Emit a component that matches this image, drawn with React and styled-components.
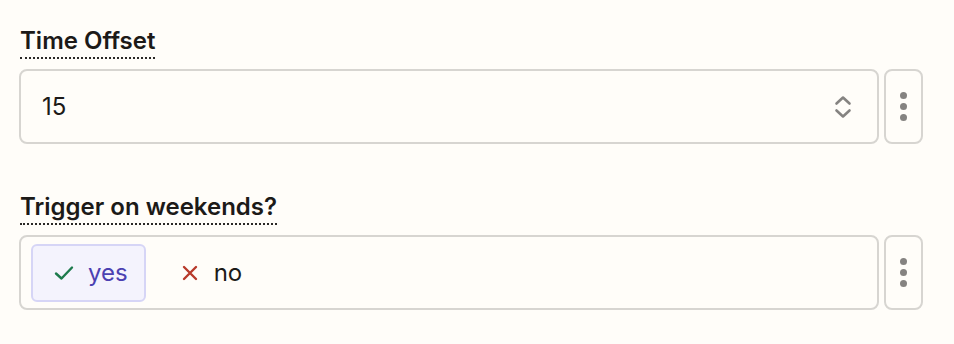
import styled, { createGlobalStyle } from "styled-components";

const Global = createGlobalStyle`
  body {
    margin: 0;
    background: #fffdf9;
    font-family: Inter, "Noto Sans", sans-serif;
    color: #1c1a18;
  }
`;

const Page = styled.div`
  padding: 26px 31px 0 19px;
  display: flex;
  flex-direction: column;
  gap: 48px;
`;

const Field = styled.div`
  display: flex;
  flex-direction: column;
  align-items: flex-start;
  gap: 10px;
`;

const Label = styled.div`
  font-size: 24px;
  font-weight: 600;
  line-height: 29px;
  margin-left: 1px;
  padding-bottom: 2px;
  border-bottom: 2px dotted #2a2826;
`;

const Row = styled.div`
  display: flex;
  gap: 5px;
  width: 100%;
  height: 75px;
`;

const Box = styled.div`
  flex: 1;
  display: flex;
  align-items: center;
  border: 2px solid #d7d5d1;
  border-radius: 8px;
  padding: ${(p) => p.$pad || "0 25px 0 21px"};
`;

const Value = styled.span`
  flex: 1;
  font-size: 24px;
  color: #1c1a18;
`;

const Kebab = styled.div`
  width: 35px;
  border: 2px solid #d7d5d1;
  border-radius: 8px;
  display: flex;
  flex-direction: column;
  align-items: center;
  justify-content: center;
  gap: 4px;
`;

const Dot = styled.span`
  width: 7px;
  height: 7px;
  border-radius: 50%;
  background: #858381;
`;

const Choice = styled.div`
  display: flex;
  align-items: center;
  gap: ${(p) => (p.$on ? "14px" : "16px")};
  height: 54px;
  padding: ${(p) => (p.$on ? "0 16px 0 21px" : "0 16px 0 34px")};
  border: 2px solid ${(p) => (p.$on ? "#d6d5f6" : "transparent")};
  background: ${(p) => (p.$on ? "#f4f3fd" : "transparent")};
  border-radius: 6px;
  font-size: 24px;
  color: ${(p) => (p.$on ? "#4b41b2" : "#1c1a18")};
`;

function Chevrons() {
  return (
    <svg width="18" height="26" viewBox="0 0 18 26" fill="none">
      <path d="M2.5 9.5L9 3.5L15.5 9.5" stroke="#858381" strokeWidth="2.6" strokeLinecap="round" strokeLinejoin="round" />
      <path d="M2.5 16.5L9 22.5L15.5 16.5" stroke="#858381" strokeWidth="2.6" strokeLinecap="round" strokeLinejoin="round" />
    </svg>
  );
}

function Check() {
  return (
    <svg width="20" height="16" viewBox="0 0 20 16" fill="none">
      <path d="M2 8.5L7.5 13.5L18 2.5" stroke="#1d7a4c" strokeWidth="2.4" strokeLinecap="round" strokeLinejoin="round" />
    </svg>
  );
}

function Cross() {
  return (
    <svg width="16" height="16" viewBox="0 0 16 16" fill="none">
      <path d="M2 2L14 14M14 2L2 14" stroke="#b83a2b" strokeWidth="2.4" strokeLinecap="round" />
    </svg>
  );
}

function Menu() {
  return (
    <Kebab>
      <Dot />
      <Dot />
      <Dot />
    </Kebab>
  );
}

export default function App() {
  return (
    <>
      <Global />
      <Page>
        <Field>
          <Label>Time Offset</Label>
          <Row>
            <Box>
              <Value>15</Value>
              <Chevrons />
            </Box>
            <Menu />
          </Row>
        </Field>
        <Field>
          <Label>Trigger on weekends?</Label>
          <Row>
            <Box $pad="0 10px">
              <Choice $on>
                <Check />
                yes
              </Choice>
              <Choice>
                <Cross />
                no
              </Choice>
            </Box>
            <Menu />
          </Row>
        </Field>
      </Page>
    </>
  );
}
